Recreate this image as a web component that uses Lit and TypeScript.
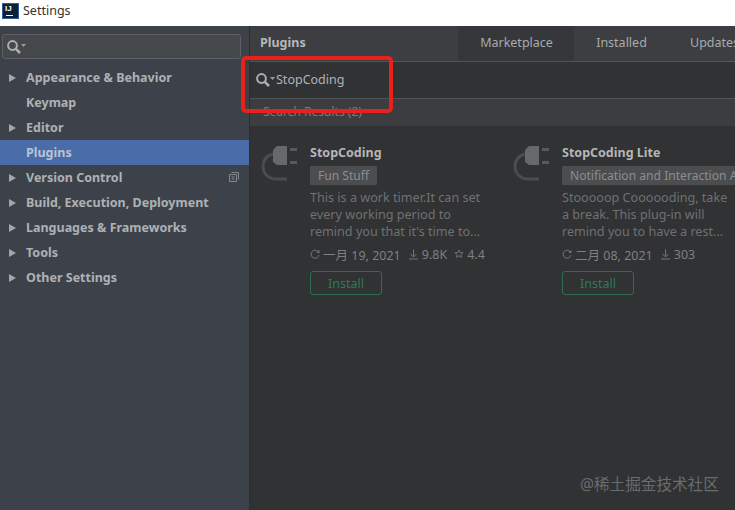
import { LitElement, html, css, svg } from "lit";
import { customElement } from "lit/decorators.js";

const nav = [
  { t: "Appearance & Behavior", a: true },
  { t: "Keymap", a: false },
  { t: "Editor", a: true },
  { t: "Plugins", a: false, sel: true },
  { t: "Version Control", a: true, copy: true },
  { t: "Build, Execution, Deployment", a: true },
  { t: "Languages & Frameworks", a: true },
  { t: "Tools", a: true },
  { t: "Other Settings", a: true },
];

const searchIcon = svg`<svg class="si" width="20" height="14" viewBox="0 0 20 14"><circle cx="5.5" cy="5.5" r="4.4" fill="none" stroke="#adafb1" stroke-width="2"/><path d="M8.8 8.8L13 13" stroke="#adafb1" stroke-width="2.6"/><path d="M14 4h5l-2.5 3z" fill="#9a9c9e"/></svg>`;

const plug = svg`<svg width="38" height="36" viewBox="0 0 38 36"><path d="M12 8C5 10 2 14 2 20C2 28 8 33 15 33H26" fill="none" stroke="#4a4d4f" stroke-width="3"/><path d="M12 4l4-4h10v19H16l-4-3z" fill="#65696b"/><path d="M29 2h7v3h-7zM29 15h7v3h-7z" fill="#585b5d"/></svg>`;

const refresh = svg`<svg width="10" height="10" viewBox="0 0 10 10"><path d="M8.4 3A4 4 0 1 0 9 6" fill="none" stroke="#737678" stroke-width="1"/><path d="M9.5 0.8v3.2H6.3z" fill="#737678"/></svg>`;
const dl = svg`<svg width="11" height="11" viewBox="0 0 11 11"><path d="M5.5 0.5v7M2.5 5l3 3 3-3M1 10h9" fill="none" stroke="#737678" stroke-width="1"/></svg>`;
const star = svg`<svg width="10" height="10" viewBox="0 0 11 11"><path d="M5.5 1l1.3 3h3.2l-2.5 2.1.9 3.2-2.9-1.8-2.9 1.8.9-3.2L1 4h3.2z" fill="none" stroke="#737678" stroke-width="1"/></svg>`;

@customElement("app-root")
export class AppRoot extends LitElement {
  static styles = css`
    :host { display: block; width: 735px; height: 510px; overflow: hidden; position: relative; font-family: "Noto Sans", "Noto Sans CJK SC", sans-serif; }
    .title { height: 26px; background: #fff; display: flex; align-items: center; gap: 4px; padding: 0 0 5px 2px; box-sizing: border-box; color: #333; font-size: 12.5px; }
    .logo { width: 17px; height: 16px; background: #0b2036; border: 1px solid #2f5f9a; box-sizing: border-box; color: #fff; font: bold 8px/9px "Liberation Sans", sans-serif; padding-left: 2px; position: relative; }
    .logo i { position: absolute; left: 3px; bottom: 2px; width: 7px; height: 1px; background: #fff; }
    .body { display: flex; height: 484px; }
    .side { width: 249px; flex: none; background: #3d424a; border-right: 1px solid #2c2e30; padding-top: 8px; box-sizing: content-box; }
    .sbox { margin: 0 8px 0 2px; height: 23px; border: 1px solid #5c6064; border-radius: 3px; background: #45484a; display: flex; align-items: center; padding-left: 4px; }
    .navlist { margin-top: 6px; }
    .row { height: 25px; box-sizing: border-box; display: flex; align-items: center; font-size: 12.5px; font-weight: 700; color: #aeb1b4; position: relative; }
    .row.sel { background: #4a6daa; color: #b9c3d4; }
    .arrow { width: 26px; flex: none; padding-left: 9px; box-sizing: border-box; }
    .tri { display: block; width: 0; height: 0; border-left: 7px solid #a4a7aa; border-top: 4.5px solid transparent; border-bottom: 4.5px solid transparent; }
    .copy { position: absolute; left: 229px; top: 7px; }
    .main { flex: 1; min-width: 0; background: #303234; color: #b0b2b4; display: flex; flex-direction: column; }
    .head { height: 35px; background: #3c3e41; display: flex; align-items: stretch; padding-left: 10px; border-bottom: 1px solid #525456; }
    .head b { font-size: 12.5px; width: 198px; flex: none; align-self: center; color: #b4b7ba; margin-top: -3px; }
    .tab { flex: none; font-size: 12.5px; display: flex; align-items: center; justify-content: center; color: #a9abad; padding-bottom: 2px; box-sizing: border-box; }
    .tab.on { background: #35373a; width: 116px; padding-left: 1px; }
    .t2 { width: 95px; }
    .t3 { padding-left: 21px; }
    .search { display: flex; align-items: flex-start; padding: 9px 0 0 6px; box-sizing: border-box; font-size: 12.5px; line-height: 17px; color: #b0b2b4; border-bottom: 1px solid #505254; height: 37px; }
    .search .si { margin-top: 2px; }
    .res { height: 27px; background: #3b3d40; padding-left: 13px; font-size: 12px; line-height: 25px; color: #7a7c7e; }
    .grid { display: flex; padding-top: 18px; padding-left: 11px; }
    .card { width: 252px; flex: none; display: flex; }
    .ic { width: 49px; flex: none; padding-top: 2px; }
    .info { flex: 1; min-width: 0; display: flex; flex-direction: column; align-items: flex-start; }
    .name { font-size: 12.5px; font-weight: 700; color: #b4b6b8; line-height: 18px; }
    .tag { margin-top: 4px; height: 19px; background: #4b4d4f; color: #8b8d8f; font-size: 12.1px; line-height: 19px; padding: 0 8px; white-space: nowrap; border-radius: 1px; }
    .desc { margin-top: 4px; font-size: 12.6px; line-height: 17px; color: #6f7173; white-space: pre; }
    .meta { margin-top: 4px; height: 20px; display: flex; align-items: center; gap: 3px; font-size: 12.5px; color: #7d8082; white-space: nowrap; }
    .meta .d { margin-right: 4px; }
    .btn { margin-top: 7px; width: 72px; height: 24px; box-sizing: border-box; border: 1px solid #2f6b50; border-radius: 3px; color: #2f7a58; font-size: 12.5px; display: flex; align-items: center; justify-content: center; }
    .red { position: absolute; left: 241px; top: 56px; width: 152px; height: 57px; box-sizing: border-box; border: 4px solid #e8211a; border-radius: 5px; }
    .wm { position: absolute; left: 580px; top: 474px; font-size: 15.6px; color: #6a6c6e; white-space: nowrap; line-height: 20px; }
  `;

  card(name: string, tag: string, desc: string, date: string, dls: string, rating?: string) {
    return html`<div class="card">
      <div class="ic">${plug}</div>
      <div class="info">
        <div class="name">${name}</div>
        <div class="tag">${tag}</div>
        <div class="desc">${desc}</div>
        <div class="meta">${refresh}<span class="d">${date}</span>${dl}<span class="d">${dls}</span>${rating ? html`${star}<span>${rating}</span>` : ""}</div>
        <div class="btn">Install</div>
      </div>
    </div>`;
  }

  render() {
    return html`
      <div class="title"><div class="logo">IJ<i></i></div><span>Settings</span></div>
      <div class="body">
        <div class="side">
          <div class="sbox">${searchIcon}</div>
          <div class="navlist">
            ${nav.map((n) => html`<div class="row ${n.sel ? "sel" : ""}">
              <span class="arrow">${n.a ? html`<span class="tri"></span>` : ""}</span>${n.t}
              ${n.copy ? html`<svg class="copy" width="10" height="10" viewBox="0 0 10 10"><path d="M2.5.5h7v7M.5 2.5h7v7h-7z M2.5 5h3M2.5 7h3" fill="none" stroke="#85888b"/></svg>` : ""}
            </div>`)}
          </div>
        </div>
        <div class="main">
          <div class="head"><b>Plugins</b><div class="tab on">Marketplace</div><div class="tab t2">Installed</div><div class="tab t3">Updates</div></div>
          <div class="search">${searchIcon}<span>StopCoding</span></div>
          <div class="res">Search Results (2)</div>
          <div class="grid">
            ${this.card("StopCoding", "Fun Stuff", "This is a work timer.It can set\nevery working period to\nremind you that it's time to...", "一月 19, 2021", "9.8K", "4.4")}
            ${this.card("StopCoding Lite", "Notification and Interaction Alerts", "Stooooop Coooooding, take\na break. This plug-in will\nremind you to have a rest...", "二月 08, 2021", "303")}
          </div>
        </div>
      </div>
      <div class="red"></div>
      <div class="wm">@稀土掘金技术社区</div>
    `;
  }
}
